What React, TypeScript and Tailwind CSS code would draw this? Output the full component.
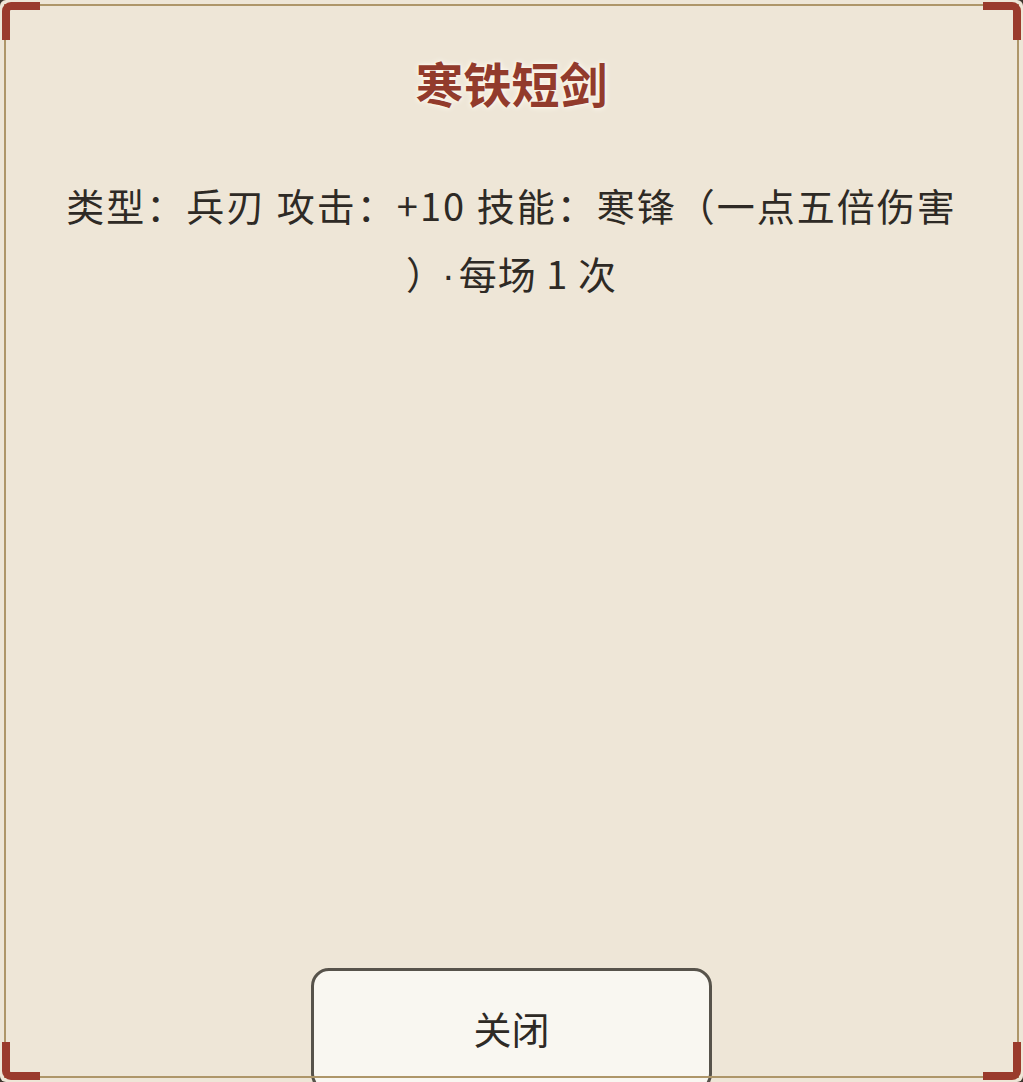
import React from "react";

export default function App() {
  const font = { fontFamily: '"Noto Sans CJK SC", "Noto Sans", sans-serif' };
  return (
    <div className="w-[1023px] h-[1082px] bg-[#3d352d] overflow-hidden" style={font}>
      <div className="relative w-full h-full rounded-[6px] bg-[#eee6d7] overflow-hidden flex flex-col items-center pt-[52px]">
        <h1 className="h-[60px] leading-[60px] text-[48px] font-bold text-[#923b2c] [text-shadow:0_0_3px_#fffaf0,0_0_6px_#fffaf0]">
          寒铁短剑
        </h1>
        <div className="mt-[59px] text-center text-[38px] leading-[68px] tracking-[2px] text-[#2e2a25]">
          <div className="whitespace-nowrap">类型：兵刃 攻击：+10 技能：寒锋（一点五倍伤害</div>
          <div className="whitespace-nowrap tracking-[1px]">
            ）<span className="ml-[16px] mr-[3px] font-['Liberation_Sans',sans-serif]">·</span>每场 1 次
          </div>
        </div>
        <div className="flex-1" />
        <button className="mb-[-10px] w-[401px] h-[124px] shrink-0 pb-[6px] rounded-[18px] border-[3px] border-[#57534b] bg-[#f9f7f1] text-[38px] text-[#2e2a25]">
          关闭
        </button>
        <div className="pointer-events-none absolute inset-[4px] border-2 border-[#ae9669]" />
        <div className="pointer-events-none absolute top-[2px] left-[2px] w-[38px] h-[38px] border-t-[8px] border-l-[8px] border-[#9a3a2c] rounded-tl-[9px]" />
        <div className="pointer-events-none absolute top-[2px] right-[2px] w-[38px] h-[38px] border-t-[8px] border-r-[8px] border-[#9a3a2c] rounded-tr-[9px]" />
        <div className="pointer-events-none absolute bottom-[2px] left-[2px] w-[38px] h-[38px] border-b-[8px] border-l-[8px] border-[#9a3a2c] rounded-bl-[9px]" />
        <div className="pointer-events-none absolute bottom-[2px] right-[2px] w-[38px] h-[38px] border-b-[8px] border-r-[8px] border-[#9a3a2c] rounded-br-[9px]" />
      </div>
    </div>
  );
}
